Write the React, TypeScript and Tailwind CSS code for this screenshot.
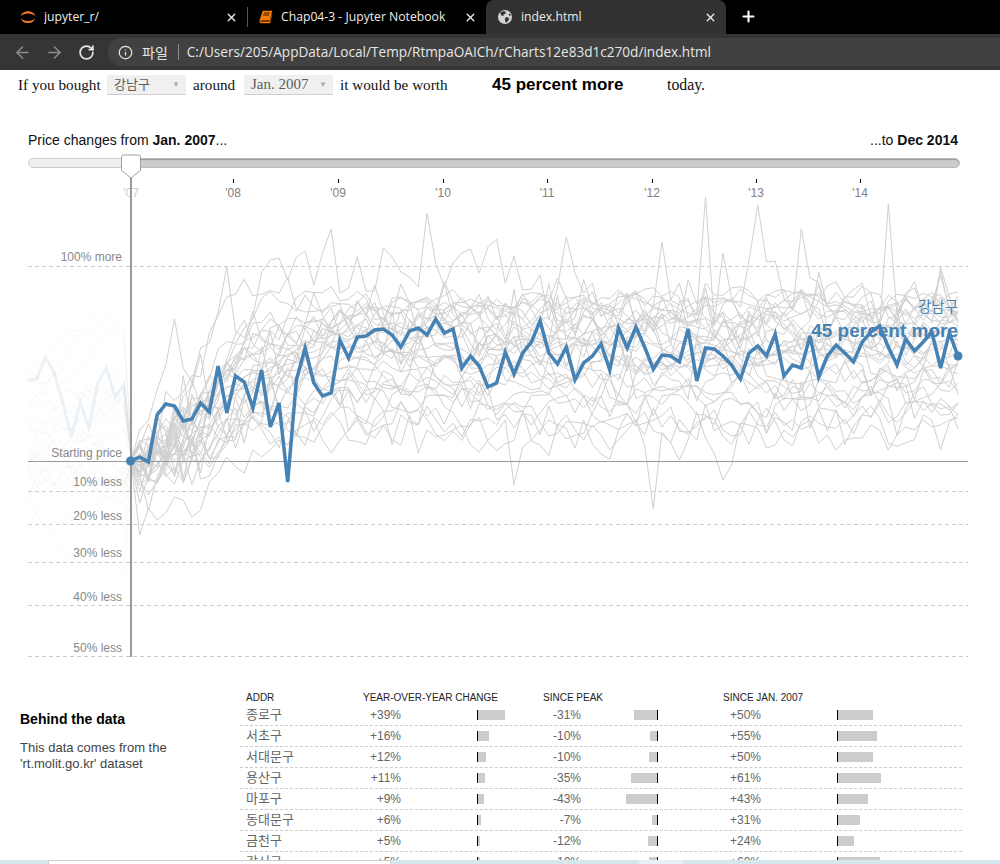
import * as React from 'react';
import { ArrowLeft, ArrowRight, RotateCw, Info, X, Plus } from 'lucide-react';

const arial = { fontFamily: '"Liberation Sans", "Noto Sans CJK KR", sans-serif' };

const stepX = 8.705;
const startX = 131;

const blue = [461,457,462,415,404,406,421,419,403,412,366,413,376,382,408,370,427,403,482,380,348,383,396,393,340,358,337,336,330,329,335,347,331,328,335,319,333,329,368,356,366,387,383,352,374,353,342,321,353,364,347,380,363,356,344,370,328,348,327,347,369,355,356,362,329,381,348,349,356,365,379,353,346,356,334,376,365,368,336,377,356,345,353,362,342,332,326,347,365,339,351,342,332,368,333,356];
const upper = [461,430,420,390,365,319,368,382,348,343,312,267,331,338,317,272,260,258,280,257,251,285,253,229,293,288,257,291,291,248,257,272,277,287,213,263,287,263,253,249,273,247,239,283,256,290,289,275,320,287,237,273,293,283,317,305,313,303,293,317,307,242,300,283,317,313,197,323,253,298,307,260,205,262,261,298,310,229,278,282,330,317,297,297,286,293,327,204,315,293,288,310,323,267,297,323];
const lower = [461,535,508,520,513,497,500,517,510,482,473,457,467,473,450,457,450,440,445,430,425,420,440,453,440,430,420,435,430,425,440,445,415,453,430,437,435,430,425,445,452,440,432,420,485,447,440,430,420,425,415,430,440,425,435,450,440,430,420,445,509,432,443,460,440,412,438,453,480,465,423,425,428,448,445,430,437,425,420,443,435,450,440,438,438,425,430,450,435,427,430,420,427,425,420,418];
const faintBlue = [381,379,357,373,403,437,402,428,383,368,397,385,461];

function seeded(seed: number) {
  let s = seed;
  return () => {
    s = (s * 16807) % 2147483647;
    return s / 2147483647;
  };
}

const rand = seeded(20141);
const grayLines: number[][] = [];
const faintLines: string[] = [];
for (let l = 0; l < 32; l++) {
  const t = l / 31;
  const level = 300 + (t * 0.6 + 0.4 * t * t * t) * 128;
  const noise = 16 + rand() * 28;
  const ramp = 10 + rand() * 18;
  const ys: number[] = [];
  let drift = 0;
  for (let i = 0; i < 96; i++) {
    const rise = Math.min(1, i / ramp);
    drift = drift * 0.45 + (rand() - 0.5) * noise;
    const spike = rand() < 0.08 ? (rand() - 0.55) * 70 : 0;
    const start = i === 0 ? 0 : Math.min(1, i / 4 + 0.4);
    ys.push(461 - (461 - level) * rise + (drift + spike) * start + (i > 0 && i < 10 ? rand() * 44 - 10 : 0));
  }
  grayLines.push(ys);
  const pts: string[] = [];
  let y = 370 + rand() * 130;
  for (let i = 0; i < 13; i++) {
    y += (rand() - 0.5) * 36;
    pts.push(`${28 + i * stepX},${(i === 12 ? 461 : y).toFixed(1)}`);
  }
  faintLines.push(pts.join(' '));
}

const toPoints = (ys: number[]) => ys.map((y, i) => `${(startX + i * stepX).toFixed(1)},${y.toFixed(1)}`).join(' ');

const years = [
  { label: "'07", x: 131 },
  { label: "'08", x: 233 },
  { label: "'09", x: 338 },
  { label: "'10", x: 443 },
  { label: "'11", x: 547 },
  { label: "'12", x: 652 },
  { label: "'13", x: 756 },
  { label: "'14", x: 860 },
];

const guides = [
  { label: '100% more', y: 266, textY: 261 },
  { label: '10% less', y: 491, textY: 486 },
  { label: '20% less', y: 524, textY: 520 },
  { label: '30% less', y: 562, textY: 557 },
  { label: '40% less', y: 605, textY: 601 },
  { label: '50% less', y: 656, textY: 652 },
];

const rows = [
  { name: '종로구', yoy: '+39%', yoyW: 27, peak: '-31%', peakW: 23, jan: '+50%', janW: 35 },
  { name: '서초구', yoy: '+16%', yoyW: 11, peak: '-10%', peakW: 7, jan: '+55%', janW: 39 },
  { name: '서대문구', yoy: '+12%', yoyW: 8, peak: '-10%', peakW: 8, jan: '+50%', janW: 35 },
  { name: '용산구', yoy: '+11%', yoyW: 7, peak: '-35%', peakW: 26, jan: '+61%', janW: 43 },
  { name: '마포구', yoy: '+9%', yoyW: 6, peak: '-43%', peakW: 31, jan: '+43%', janW: 30 },
  { name: '동대문구', yoy: '+6%', yoyW: 3, peak: '-7%', peakW: 5, jan: '+31%', janW: 22 },
  { name: '금천구', yoy: '+5%', yoyW: 2, peak: '-12%', peakW: 9, jan: '+24%', janW: 16 },
  { name: '강서구', yoy: '+5%', yoyW: 2, peak: '-10%', peakW: 8, jan: '+60%', janW: 42 },
];

function JupyterIcon() {
  return (
    <svg width="16" height="16" viewBox="0 0 16 16" className="shrink-0">
      <path d="M0.800 7C2.500 0.800 13.500 0.800 15.200 7C12.500 3.600 3.500 3.600 0.800 7Z" fill="#f37726" />
      <path d="M0.800 9.500C2.500 15.600 13.500 15.600 15.200 9.500C12.500 12.800 3.500 12.800 0.800 9.500Z" fill="#f37726" />
    </svg>
  );
}

function BookIcon() {
  return (
    <svg width="14" height="14" viewBox="0 0 14 14" className="shrink-0">
      <path d="M3.600 0.800H13.200L10.800 10.400H2.200C1.200 10.400 1 11.600 2 11.600H10.900L13.200 3V4.500L11.200 13.200H2C0.400 13.200 0.200 11.600 0.600 10.200Z" fill="#f57c00" />
      <path d="M4.800 3H10.500M4.200 5H10" stroke="#000" strokeWidth="0.800" />
    </svg>
  );
}

function GlobeIcon() {
  return (
    <svg width="16" height="16" viewBox="0 0 16 16" className="shrink-0">
      <circle cx="8" cy="8" r="7" fill="#d2d2d2" />
      <path d="M3 3.600C5 2.600 7 2 8.400 2.400L8.800 4.400L6.600 5.400L6.400 7L4.400 6.600ZM8.600 8.200L11.600 8.600L12 10.600L9.800 13.400L8.600 13.200L7.800 10.600ZM12.600 4.200L14 6.400L12.600 6.800L11.600 5.400Z" fill="#323232" />
    </svg>
  );
}

function Tab({ icon, title, width, active }: { icon: React.ReactNode; title: string; width: string; active?: boolean }) {
  return (
    <div className={`flex items-center h-[34px] pl-[11px] pr-[9px] gap-[8px] ${width} ${active ? 'bg-[#323232] rounded-t-[8px]' : ''}`}>
      {icon}
      <span className="flex-1 text-[12.2px] text-[#ececec] truncate" style={{ fontFamily: '"Open Sans", sans-serif' }}>{title}</span>
      <X size={13} strokeWidth={2.5} className="text-[#e8e8e8] shrink-0" />
    </div>
  );
}

function BrowserBar() {
  return (
    <header className="shrink-0">
      <div className="flex items-end h-[34px] bg-black pl-[9px]">
        <Tab icon={<JupyterIcon />} title="jupyter_r/" width="w-[238px]" />
        <div className="w-px h-[20px] bg-[#555] mb-[7px]" />
        <Tab icon={<BookIcon />} title="Chap04-3 - Jupyter Notebook" width="w-[238px]" />
        <Tab icon={<GlobeIcon />} title="index.html" width="w-[240px]" active />
        <Plus size={17} strokeWidth={3} className="text-white ml-[14px] mb-[9px]" />
      </div>
      <div className="flex items-center h-[36px] bg-[#353535] pl-[13px]">
        <ArrowLeft size={19} strokeWidth={2} className="text-[#8c8c8c]" />
        <ArrowRight size={19} strokeWidth={2} className="text-[#8c8c8c] ml-[13px]" />
        <RotateCw size={17} strokeWidth={2.5} className="text-[#e4e4e4] ml-[14px]" />
        <div className="flex items-center flex-1 h-[28px] ml-[13px] bg-[#414141] rounded-l-full pl-[10px] text-[#e6e6e6]" style={{ fontFamily: '"Open Sans", "Noto Sans CJK KR", sans-serif' }}>
          <Info size={15} strokeWidth={2} className="text-[#e6e6e6]" />
          <span className="ml-[9px] text-[14px]">파일</span>
          <div className="w-px h-[16px] bg-[#8a8a8a] ml-[10px]" />
          <span className="ml-[8px] text-[13.6px]">C:/Users/205/AppData/Local/Temp/RtmpaOAICh/rCharts12e83d1c270d/index.html</span>
        </div>
      </div>
    </header>
  );
}

function Dropdown({ value, width, size }: { value: string; width: string; size: string }) {
  return (
    <div className={`flex items-center justify-between h-[20px] pl-[7px] pr-[6px] bg-[#f0f0f0] border-b border-[#cfcfcf] text-[#5c5c5c] ${size} ${width}`}>
      <span>{value}</span>
      <span className="text-[8px] text-[#aaa]">▼</span>
    </div>
  );
}

function Sentence() {
  return (
    <div className="flex items-center h-[30px] pl-[18px] text-[15.200px] text-[#111]" style={{ fontFamily: '"Liberation Serif", "Noto Sans CJK KR", serif' }}>
      <span className="w-[83px]">If you bought</span>
      <div className="ml-[6px]"><Dropdown value="강남구" width="w-[79px]" size="text-[13px]" /></div>
      <span className="ml-[7px] w-[45px]">around</span>
      <div className="ml-[6px]"><Dropdown value="Jan. 2007" width="w-[89px]" size="text-[15px]" /></div>
      <span className="ml-[7px] w-[108px]">it would be worth</span>
      <span className="ml-[44px] w-[175px] text-[17px] font-bold text-black" style={arial}>45 percent more</span>
      <span className="text-[15.800px]">today.</span>
    </div>
  );
}

function Slider() {
  return (
    <div className="px-[28px] pt-[32px] pb-[2px]" style={arial}>
      <div className="flex justify-between w-[930px] text-[14px] leading-[16px] text-[#111]">
        <span>Price changes from <b>Jan. 2007</b>...</span>
        <span>...to <b>Dec 2014</b></span>
      </div>
      <div className="relative flex w-[932px] h-[10px] mt-[10px]">
        <div className="w-[100px] bg-[#eeeeee] border border-[#cccccc] rounded-l-[5px]" />
        <div className="flex-1 bg-[#cccccc] border border-[#bbbbbb] rounded-r-[5px] shadow-[inset_0_1px_1px_#999]" />
        <svg width="22" height="26" viewBox="0 0 22 26" className="absolute left-[92px] top-[-4px]">
          <path d="M1.500 3a2 2 0 0 1 2-2h15a2 2 0 0 1 2 2v13.500l-9.500 7.500-9.500-7.500z" fill="#fff" stroke="#a0a0a0" strokeWidth="1" />
        </svg>
      </div>
    </div>
  );
}

function Chart() {
  return (
    <svg width="1000" height="490" viewBox="0 170 1000 490" className="block" style={arial}>
      {faintLines.map((pts, i) => (
        <polyline key={i} points={pts} fill="none" stroke="#cccccc" strokeOpacity="0.12" strokeWidth="1" />
      ))}
      <polyline points={faintBlue.map((y, i) => `${28 + i * stepX},${y}`).join(' ')} fill="none" stroke="#4682b4" strokeOpacity="0.1" strokeWidth="3" />

      {years.map((t) => (
        <g key={t.label}>
          {t.x !== 131 && <line x1={t.x + 0.5} x2={t.x + 0.5} y1="179" y2="183" stroke="#000" />}
          <text x={t.x} y="197" textAnchor="middle" fontSize="12" fill={t.x === 131 ? '#cccccc' : '#808080'}>{t.label}</text>
        </g>
      ))}

      {guides.map((g) => (
        <g key={g.label}>
          <line x1="28" x2="968" y1={g.y + 0.5} y2={g.y + 0.5} stroke="#cccccc" strokeDasharray="4 3" />
          <text x="122" y={g.textY} textAnchor="end" fontSize="12" fill="#888888">{g.label}</text>
        </g>
      ))}
      <text x="122" y="457" textAnchor="end" fontSize="12" fill="#888888">Starting price</text>

      {grayLines.map((ys, i) => (
        <polyline key={i} points={toPoints(ys)} fill="none" stroke="#d0d0d0" strokeWidth="1" />
      ))}
      <polyline points={toPoints(upper)} fill="none" stroke="#d0d0d0" strokeWidth="1" />
      <polyline points={toPoints(lower)} fill="none" stroke="#d0d0d0" strokeWidth="1" />

      <line x1="28" x2="968" y1="461.500" y2="461.500" stroke="#999999" />
      <line x1="131" x2="131" y1="177" y2="657" stroke="#999999" strokeWidth="2" />

      <text x="958" y="312" textAnchor="end" fontSize="14.500" fill="#4682b4">강남구</text>
      <text x="958" y="337" textAnchor="end" fontSize="19" fontWeight="700" fill="#4682b4">45 percent more</text>

      <polyline points={toPoints(blue)} fill="none" stroke="#4682b4" strokeWidth="3.500" strokeLinejoin="miter" />
      <circle cx="130.500" cy="461" r="4.500" fill="#4682b4" />
      <circle cx="958" cy="356" r="4.500" fill="#4682b4" />
    </svg>
  );
}

function BehindTheData() {
  return (
    <div className="flex pt-[30px]" style={arial}>
      <div className="w-[240px] shrink-0 pl-[20px] pt-[20px]">
        <h2 className="text-[14px] leading-[18px] font-bold text-black">Behind the data</h2>
        <p className="mt-[12px] text-[13px] leading-[16px] text-[#444]">This data comes from the<br />'rt.molit.go.kr' dataset</p>
      </div>
      <div className="w-[722px] shrink-0">
        <div className="flex text-[10px] leading-[15px] text-[#222]">
          <span className="w-[123px] pl-[6px]">ADDR</span>
          <span className="w-[180px]">YEAR-OVER-YEAR CHANGE</span>
          <span className="w-[180px]">SINCE PEAK</span>
          <span>SINCE JAN. 2007</span>
        </div>
        {rows.map((r) => (
          <div key={r.name} className="grid grid-cols-[100px_61px_120px_60px_77px_103px_201px] items-center h-[21px] border-b border-dashed border-[#cccccc] text-[12px] text-[#666]">
            <span className="pl-[6px] text-[13px]">{r.name}</span>
            <span className="text-right">{r.yoy}</span>
            <div className="flex h-[10px] pl-[76px]">
              <div className="w-px bg-black" />
              <div className="bg-[#cccccc]" style={{ width: r.yoyW }} />
            </div>
            <span className="text-right">{r.peak}</span>
            <div className="flex justify-end h-[10px]">
              <div className="bg-[#cccccc]" style={{ width: r.peakW }} />
              <div className="w-px bg-black" />
            </div>
            <span className="text-right">{r.jan}</span>
            <div className="flex h-[10px] pl-[76px]">
              <div className="w-px bg-black" />
              <div className="bg-[#cccccc]" style={{ width: r.janW }} />
            </div>
          </div>
        ))}
      </div>
    </div>
  );
}

export default function App() {
  return (
    <div className="flex flex-col w-[1000px] h-[864px] overflow-hidden bg-white">
      <BrowserBar />
      <main className="flex-1 overflow-hidden">
        <Sentence />
        <Slider />
        <Chart />
        <BehindTheData />
      </main>
      <footer className="flex h-[4px] shrink-0 bg-[#d3e7ed]">
        <div className="w-[343px] ml-[48px] bg-white border-x border-t border-[#cccccc]" />
        <div className="w-[44px] ml-[248px] bg-[#e6f0f3]" />
      </footer>
    </div>
  );
}
